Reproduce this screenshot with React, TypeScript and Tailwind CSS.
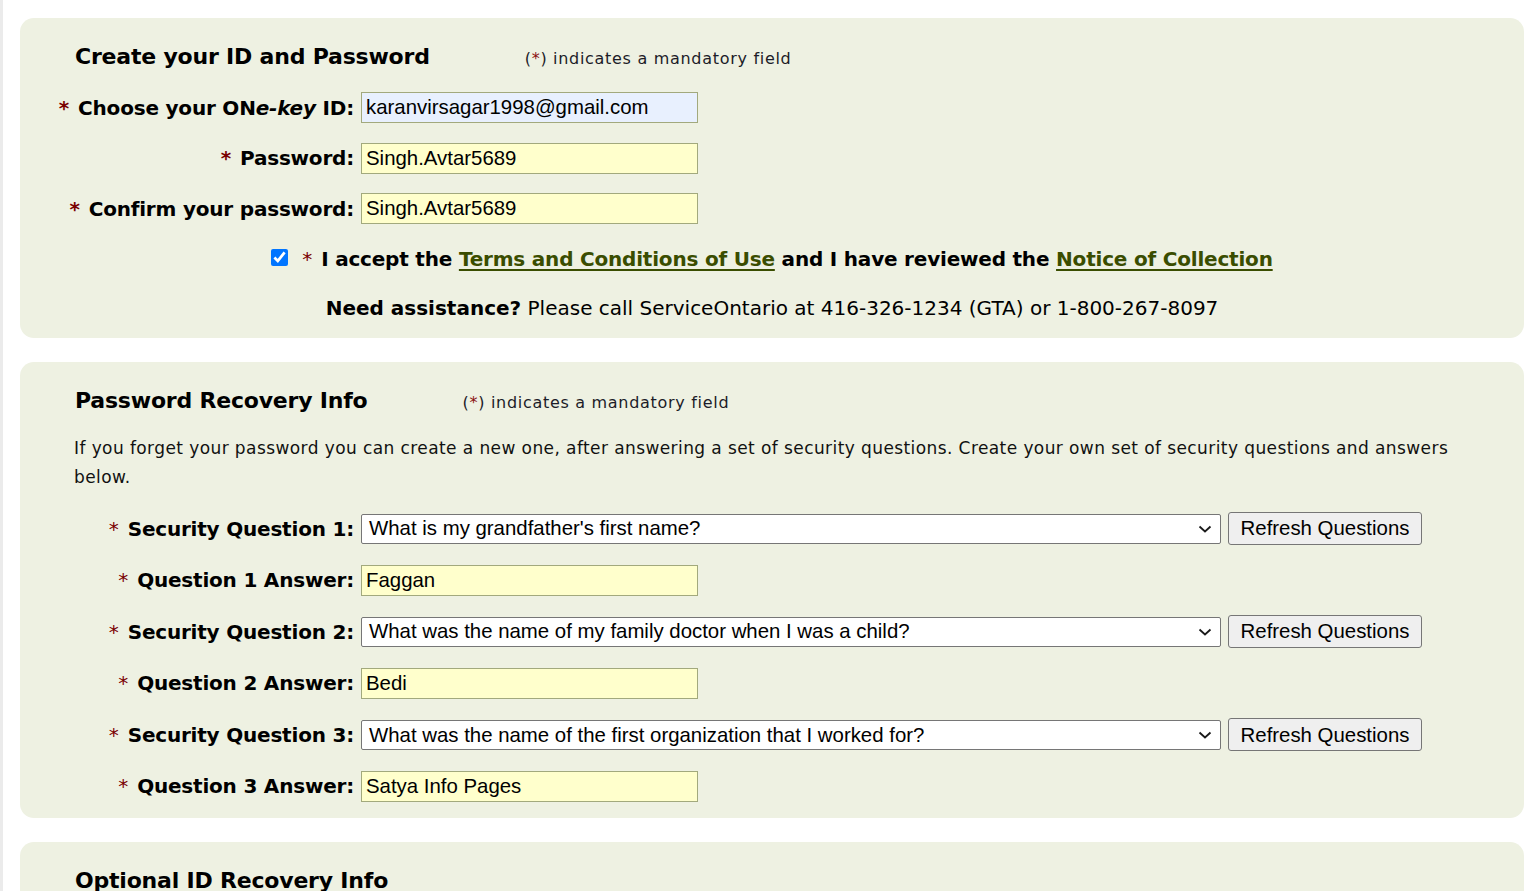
const VERDANA = "font-['Verdana','DejaVu_Sans',sans-serif]";
const ARIAL = "font-['Arial','Liberation_Sans',sans-serif]";

function Req({ bold = true }: { bold?: boolean }) {
  return (
    <span className={`text-[#7a0000] mr-[9px] ${bold ? 'font-bold' : 'font-normal'}`}>*</span>
  );
}

function MandatoryNote({ gap }: { gap: string }) {
  return (
    <span className={`${gap} text-[16px] font-normal text-[#1c1c28] tracking-[0.7px]`}>
      (<span className="text-[#8b1010]">*</span>) indicates a mandatory field
    </span>
  );
}

function TextField({ value, tone }: { value: string; tone: 'blue' | 'yellow' }) {
  return (
    <input
      readOnly
      value={value}
      className={`${ARIAL} w-[337px] h-[31px] border border-[#a2a97d] px-[4px] text-[20.4px] text-black outline-none ${
        tone === 'blue' ? 'bg-[#e8f0fe]' : 'bg-[#ffffcc]'
      }`}
    />
  );
}

function QuestionSelect({ value }: { value: string }) {
  return (
    <div className="flex items-center gap-[7px]">
      <div className="relative w-[860px] h-[30px] bg-white border border-[#767676] rounded-[2px] flex items-center">
        <span className={`${ARIAL} pl-[7px] text-[20.4px] text-black`}>{value}</span>
        <svg
          className="absolute right-[8px] top-[9px]"
          width="14"
          height="10"
          viewBox="0 0 14 10"
          fill="none"
        >
          <path d="M1.5 2.5 L7 7.5 L12.5 2.5" stroke="#1a1a1a" strokeWidth="1.8" />
        </svg>
      </div>
      <button
        className={`${ARIAL} w-[194px] h-[33px] bg-[#efefef] border border-[#767676] rounded-[3px] text-[20.4px] text-black`}
      >
        Refresh Questions
      </button>
    </div>
  );
}

function Label({ children, bold = true }: { children: React.ReactNode; bold?: boolean }) {
  return (
    <div className="flex items-center justify-end text-[20px] font-bold text-black whitespace-nowrap tracking-[-0.2px]">
      <Req bold={bold} />
      <span>{children}</span>
    </div>
  );
}

export default function App() {
  return (
    <div className={`${VERDANA} min-h-screen bg-white border-l-[3px] border-[#ebebeb] pl-[17px] pr-[7px] pt-[18px] pb-10 text-black`}>
      {/* Create ID */}
      <section className="bg-[#eef1e2] rounded-[14px] pt-[25px] pb-[15px]">
        <div className="flex items-baseline pl-[55px] h-[28px]">
          <h2 className="text-[22px] font-bold leading-[28px] tracking-[-0.2px]">Create your ID and Password</h2>
          <MandatoryNote gap="ml-[95px]" />
        </div>

        <div className="mt-[21px] grid grid-cols-[334px_1fr] gap-x-[7px] gap-y-[19.5px]">
          <Label>
            Choose your ON<i>e-key</i> ID:
          </Label>
          <TextField value="karanvirsagar1998@gmail.com" tone="blue" />
          <Label>Password:</Label>
          <TextField value="Singh.Avtar5689" tone="yellow" />
          <Label>Confirm your password:</Label>
          <TextField value="Singh.Avtar5689" tone="yellow" />
        </div>

        <div className="mt-[20px] h-[30px] flex items-center justify-center text-[20px] font-bold tracking-[-0.2px]">
          <input
            type="checkbox"
            defaultChecked
            className="w-[17px] h-[17px] accent-[#0075ff] mr-[14px] mt-[-3px]"
          />
          <span className="text-[#7a0000] font-normal mr-[9px]">*</span>
          <span>
            I accept the{' '}
            <a className="text-[#3a4d00] underline underline-offset-[3px]">Terms and Conditions of Use</a> and I
            have reviewed the{' '}
            <a className="text-[#3a4d00] underline underline-offset-[3px]">Notice of Collection</a>
          </span>
        </div>

        <p className="mt-[19px] h-[30px] leading-[30px] text-center text-[20px]">
          <b>Need assistance?</b> Please call ServiceOntario at 416-326-1234 (GTA) or 1-800-267-8097
        </p>
      </section>

      {/* Password recovery */}
      <section className="mt-[24px] bg-[#eef1e2] rounded-[14px] pt-[25px] pb-[16px]">
        <div className="flex items-baseline pl-[55px] h-[28px]">
          <h2 className="text-[22px] font-bold leading-[28px] tracking-[-0.2px]">Password Recovery Info</h2>
          <MandatoryNote gap="ml-[95px]" />
        </div>

        <p className="mt-[19px] pl-[54px] pr-[60px] text-[17px] leading-[29px] tracking-[0.41px] text-[#111]">
          If you forget your password you can create a new one, after answering a set of security
          questions. Create your own set of security questions and answers below.
        </p>

        <div className="mt-[20px] grid grid-cols-[334px_1fr] gap-x-[7px] gap-y-[19.6px] items-center">
          <Label bold={false}>Security Question 1:</Label>
          <QuestionSelect value="What is my grandfather's first name?" />
          <Label bold={false}>Question 1 Answer:</Label>
          <TextField value="Faggan" tone="yellow" />
          <Label bold={false}>Security Question 2:</Label>
          <QuestionSelect value="What was the name of my family doctor when I was a child?" />
          <Label bold={false}>Question 2 Answer:</Label>
          <TextField value="Bedi" tone="yellow" />
          <Label bold={false}>Security Question 3:</Label>
          <QuestionSelect value="What was the name of the first organization that I worked for?" />
          <Label bold={false}>Question 3 Answer:</Label>
          <TextField value="Satya Info Pages" tone="yellow" />
        </div>
      </section>

      {/* Optional recovery */}
      <section className="mt-[24px] bg-[#eef1e2] rounded-[14px] pt-[25px] pb-[40px]">
        <div className="flex items-baseline pl-[55px] h-[28px]">
          <h2 className="text-[22px] font-bold leading-[28px] tracking-[-0.2px]">Optional ID Recovery Info</h2>
        </div>
        <p className="mt-[19px] pl-[54px] text-[17px] leading-[29px]">
          If you forget your ONe-key ID, you can recover it using the information below.
        </p>
      </section>
    </div>
  );
}
